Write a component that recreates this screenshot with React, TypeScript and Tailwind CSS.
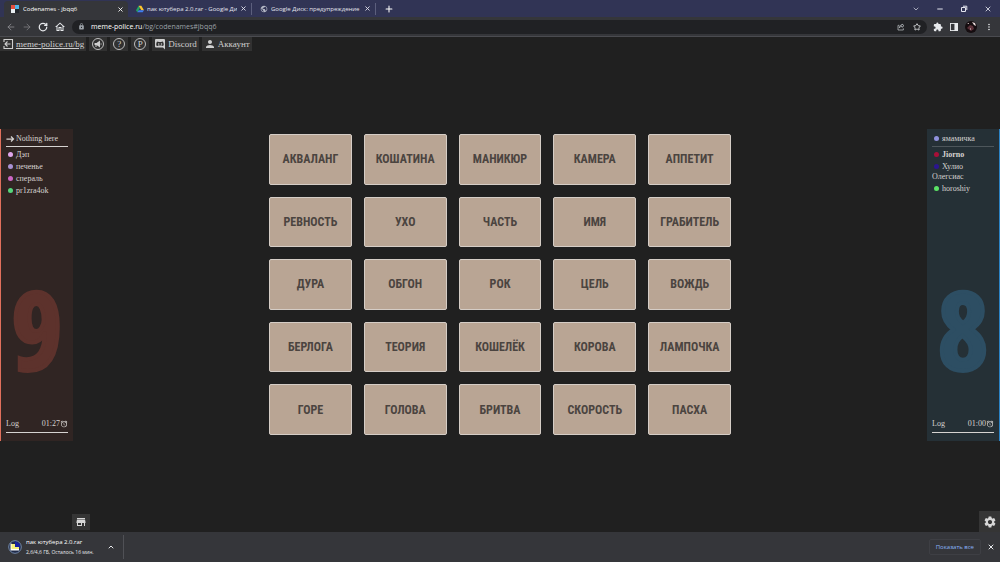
import type { ReactNode } from "react";
import { ArrowLeft, ArrowRight, ChevronDown, ChevronUp, Minus, Plus, RotateCw, Star, X } from "lucide-react";
import {
  MdAlarm,
  MdExtension,
  MdLock,
  MdMoreVert,
  MdOutlineHome,
  MdPerson,
  MdPublic,
  MdSettings,
  MdStore,
} from "react-icons/md";

const words = [
  "АКВАЛАНГ", "КОШАТИНА", "МАНИКЮР", "КАМЕРА", "АППЕТИТ",
  "РЕВНОСТЬ", "УХО", "ЧАСТЬ", "ИМЯ", "ГРАБИТЕЛЬ",
  "ДУРА", "ОБГОН", "РОК", "ЦЕЛЬ", "ВОЖДЬ",
  "БЕРЛОГА", "ТЕОРИЯ", "КОШЕЛЁК", "КОРОВА", "ЛАМПОЧКА",
  "ГОРЕ", "ГОЛОВА", "БРИТВА", "СКОРОСТЬ", "ПАСХА",
];

type Player = { name: string; color: string; bold?: boolean };

const redPlayers: Player[] = [
  { name: "Дэп", color: "#dfa6ec" },
  { name: "печенье", color: "#a992d4" },
  { name: "спераль", color: "#cc66c4" },
  { name: "pr1zra4ok", color: "#55d67b" },
];

const bluePlayers: Player[] = [
  { name: "Jiorno", color: "#a80f38", bold: true },
  { name: "Хулио Олегсиас", color: "#2b1590" },
  { name: "horoshiy", color: "#5be366" },
];

const CodenamesIcon = () => (
  <svg viewBox="0 0 8 8" className="size-2 shrink-0">
    <path fill="#e6503f" d="M0 0h4v4H0z" />
    <path fill="#4fb4e8" d="M4 0h4v4H4z" />
    <path fill="#e9eef2" d="M0 4h4v4H0z" />
    <path fill="#22262c" d="M4 4h4v4H4z" />
  </svg>
);

const DriveIcon = () => (
  <svg viewBox="0 0 24 22" className="size-2 shrink-0">
    <path fill="#22a463" d="M8 1 0 15l4 6L12 8z" />
    <path fill="#fbc52d" d="M8 1h8l8 14h-8z" />
    <path fill="#3f7df0" d="M8 15h16l-4 6H4z" />
  </svg>
);

const ExitIcon = () => (
  <svg viewBox="0 0 24 24" className="size-3" fill="none" stroke="currentColor" strokeWidth="2.2">
    <path d="M4 8V3h17v18H4v-5" />
    <path d="M17 12H6M11 7l-5 5 5 5" />
  </svg>
);

const ArrowIcon = () => (
  <svg viewBox="0 0 24 24" className="size-[10px]" fill="none" stroke="currentColor" strokeWidth="3">
    <path d="M1 12h17M12 6l6 6-6 6" />
  </svg>
);

const MegaphoneIcon = () => (
  <svg viewBox="0 0 24 24" className="size-3" fill="currentColor">
    <circle cx="12" cy="12" r="11" fill="none" stroke="currentColor" strokeWidth="1.800" />
    <path d="M5 10h4l7-5v14l-7-5v4H7v-4H5z" />
    <path d="M17.500 9a4 4 0 0 1 0 6z" />
  </svg>
);

const DiscordIcon = () => (
  <svg viewBox="0 0 24 24" className="size-3" fill="currentColor">
    <path
      fillRule="evenodd"
      d="M4 2h16a2 2 0 0 1 2 2v19l-4-4H4a2 2 0 0 1-2-2V4a2 2 0 0 1 2-2zm4 5c-1.500.3-2.500 1-2.500 1C4.600 10 4.500 12 4.500 14.500c1 1.300 2.600 1.500 3.500 1.500l1-1.300c2 .5 4 .5 6 0l1 1.300c1 0 2.500-.3 3.500-1.500 0-2.500-.2-4.500-1.200-6.500 0 0-1-.8-2.600-1l-.6 1c-2-.3-4-.3-6 0zM9.500 10.500a1.500 1.500 0 1 1 0 3 1.500 1.500 0 0 1 0-3zm5.500 0a1.500 1.500 0 1 1 0 3 1.500 1.500 0 0 1 0-3z"
    />
  </svg>
);

const LetterIcon = ({ letter }: { letter: string }) => (
  <span className="flex size-3 items-center justify-center rounded-full border border-[#bdbdbd] text-[9px] leading-none">
    {letter}
  </span>
);

const ShareIcon = () => (
  <svg viewBox="0 0 24 24" className="size-2" fill="none" stroke="currentColor" strokeWidth="2.2">
    <path d="M7 7H3v14h16v-5" />
    <path d="M15 3l6 5-6 5v-3c-4 0-6 1-8 5 0-6 3-9 8-9z" />
  </svg>
);

const SidePanelIcon = () => (
  <svg viewBox="0 0 9 9" className="size-2">
    <path fill="#e8eaed" d="M0 0h9v9H0z" />
    <path fill="#35363a" d="M1 1h4v7H1z" />
  </svg>
);

const RestoreIcon = () => (
  <svg viewBox="0 0 8 8" className="size-2" fill="none" stroke="currentColor">
    <path d="M1.500 2.500h4v4h-4zM3 1.200h3.800V5" />
  </svg>
);

const Avatar = () => (
  <svg viewBox="0 0 12 12" className="size-3">
    <circle cx="6" cy="6" r="6" fill="#150d10" />
    <path fill="#5a3038" d="M2 7l3-3 3 1 1 3-3 2z" />
    <path fill="#e8dada" d="M7 1l3 1 1 3-2-1zM2 3l2-1v1zM5 7l1 1-1 1z" />
  </svg>
);

const RarIcon = () => (
  <svg viewBox="0 0 14 14" className="size-[14px]">
    <circle cx="7" cy="7" r="6.300" fill="#1f2a48" stroke="#87a0c4" strokeWidth=".8" />
    <path fill="#1720a0" d="M7 1l5 3v4H7z" />
    <path fill="#f5ef7a" d="M3 4h4v3h4v3H3z" />
    <path fill="#fff" d="M3 9h8v1.500H3zM2.500 3.500h1v7h-1z" />
  </svg>
);

const Tab = ({ icon, title, active = false }: { icon: ReactNode; title: string; active?: boolean }) => (
  <div
    className={
      active
        ? "flex h-4 w-[124px] items-center gap-1 self-end rounded-t bg-[#35363a] pr-1 pl-[7px] text-white"
        : "flex h-3 w-[124px] items-center gap-[3px] border-r border-[#5c5f7d] pr-1 pl-2 text-[#e3e4ee]"
    }
  >
    {icon}
    <span className="min-w-0 flex-1 overflow-hidden whitespace-nowrap">{title}</span>
    <button aria-label="Закрыть вкладку">
      <X className="size-[7px]" strokeWidth={3} />
    </button>
  </div>
);

const BrowserHeader = () => (
  <header className="font-['Open_Sans','Noto_Sans',sans-serif] leading-none">
    <div className="flex h-[17px] items-center bg-[#313455] pl-1 text-[6px] leading-[10px]">
      <Tab icon={<CodenamesIcon />} title="Codenames - jbqq6" active />
      <Tab icon={<DriveIcon />} title="пак ютубера 2.0.rar - Google Ди" />
      <Tab icon={<MdPublic className="size-2 shrink-0 text-[#b5b8c6]" />} title="Google Диск: предупреждение" />
      <button aria-label="Новая вкладка" className="ml-2 text-white">
        <Plus className="size-[10px]" strokeWidth={2.5} />
      </button>
      <div className="ml-auto flex items-center gap-4 pr-2 text-[#e3e4ee]">
        <button aria-label="Поиск вкладок"><ChevronDown className="size-2" /></button>
        <button aria-label="Свернуть"><Minus className="size-2" strokeWidth={3} /></button>
        <button aria-label="Восстановить"><RestoreIcon /></button>
        <button aria-label="Закрыть"><X className="size-2" strokeWidth={2.5} /></button>
      </div>
    </div>
    <div className="flex h-5 items-center gap-1.5 border-b border-[#4a4b50] bg-[#35363a] px-1.5 text-[7px] text-[#e8eaed]">
      <button aria-label="Назад" className="text-[#8b8c90]"><ArrowLeft className="size-[10px]" /></button>
      <button aria-label="Вперёд" className="text-[#7b7c80]"><ArrowRight className="size-[10px]" /></button>
      <button aria-label="Обновить"><RotateCw className="size-[10px]" strokeWidth={3} /></button>
      <button aria-label="Домашняя страница"><MdOutlineHome className="size-3" /></button>
      <div className="flex h-[14px] flex-1 items-center gap-1.5 rounded-full bg-[#202124] px-1.5">
        <MdLock className="size-[7px] text-[#9aa0a6]" />
        <span className="flex-1 text-[#9aa0a6]">
          <span className="text-white">meme-police.ru</span>/bg/codenames#jbqq6
        </span>
        <button aria-label="Поделиться" className="mr-0.5 text-[#bdc1c6]"><ShareIcon /></button>
        <button aria-label="В закладки"><Star className="size-2" strokeWidth={2.5} /></button>
      </div>
      <div className="flex items-center gap-[7px]">
        <button aria-label="Расширения"><MdExtension className="size-[10px]" /></button>
        <button aria-label="Боковая панель"><SidePanelIcon /></button>
        <button aria-label="Профиль"><Avatar /></button>
        <button aria-label="Меню"><MdMoreVert className="size-[10px]" /></button>
      </div>
    </div>
  </header>
);

const textButton = "flex h-[14px] items-center gap-0.5 bg-[#313131] px-0.5";
const iconButton = "flex h-[14px] w-[18px] items-center justify-center bg-[#313131]";

const GameToolbar = () => (
  <nav className="flex h-[21px] items-start gap-[3px] text-[9px] leading-none text-[#cfcfcf]">
    <a href="#bg" className={textButton}>
      <ExitIcon />
      <span className="underline">meme-police.ru/bg</span>
    </a>
    <button aria-label="Объявления" className={iconButton}><MegaphoneIcon /></button>
    <button className={iconButton}><LetterIcon letter="?" /></button>
    <button className={iconButton}><LetterIcon letter="P" /></button>
    <button className={textButton}><DiscordIcon />Discord</button>
    <button className={textButton}><MdPerson className="size-3" />Аккаунт</button>
  </nav>
);

const Dot = ({ color }: { color: string }) => (
  <span className="mr-[3px] ml-0.5 inline-block size-[5px] rounded-full" style={{ backgroundColor: color }} />
);

type TeamPanelProps = {
  className: string;
  scoreClass: string;
  lineClass: string;
  master: ReactNode;
  players: Player[];
  score: number;
  time: string;
};

const TeamPanel = ({ className, scoreClass, lineClass, master, players, score, time }: TeamPanelProps) => (
  <section className={`flex h-[312px] w-[73px] flex-col pt-[5px] pb-2 text-[8px] leading-[10px] text-[#d6d3d1] ${className}`}>
    <div className={`border-b pb-0.5 ${lineClass}`}>{master}</div>
    <ul className="flex flex-col gap-0.5 pt-[3px]">
      {players.map((player) => (
        <li key={player.name} className={player.bold ? "font-bold" : ""}>
          <Dot color={player.color} />
          {player.name}
        </li>
      ))}
    </ul>
    <div
      className={`mt-auto mb-9 text-center font-['Open_Sans_Condensed','Noto_Sans_Condensed','Roboto_Condensed','Noto_Sans',sans-serif] text-[108px] leading-[108px] font-black [-webkit-text-stroke:4px_currentColor] ${scoreClass}`}
    >
      {score}
    </div>
    <div className="flex items-center justify-between border-b border-[#d6d3d1] pb-[3px]">
      <span>Log</span>
      <span className="flex items-center">
        {time}
        <MdAlarm className="size-2" />
      </span>
    </div>
  </section>
);

const Board = () => (
  <div className="grid h-[301px] w-full max-w-[462px] grid-cols-5 grid-rows-5 gap-3">
    {words.map((word) => (
      <button
        key={word}
        className="rounded-xs border border-[#d5cdc6] bg-[#b9a594] text-center font-['Roboto_Condensed','Liberation_Sans_Narrow',Roboto,sans-serif] text-[12px] leading-none font-bold text-[#4b4440]"
      >
        {word}
      </button>
    ))}
  </div>
);

const DownloadShelf = () => (
  <footer className="flex h-[30px] items-center bg-[#35363a] pr-[5px] pl-2 font-['Open_Sans','Noto_Sans',sans-serif] text-[#e8eaed]">
    <div className="flex h-6 w-[116px] items-center gap-1 border-r border-[#505156]">
      <RarIcon />
      <div className="flex-1 whitespace-nowrap">
        <div className="text-[6px] leading-[10px] text-white">пак ютубера 2.0.rar</div>
        <div className="text-[5px] leading-[10px]">2,6/4,6 ГБ, Осталось 16 мин.</div>
      </div>
      <button aria-label="Параметры загрузки" className="mr-2">
        <ChevronUp className="size-2" strokeWidth={3} />
      </button>
    </div>
    <button className="mr-1.5 ml-auto h-4 rounded-xs border border-[#3e3f44] px-1.5 text-[6px] leading-none text-[#8ab4f8]">
      Показать все
    </button>
    <button aria-label="Закрыть панель">
      <X className="size-2" strokeWidth={3} />
    </button>
  </footer>
);

export default function App() {
  return (
    <div className="flex min-h-screen flex-col bg-[#202020] font-['Liberation_Serif',serif]">
      <BrowserHeader />
      <main className="flex flex-1 flex-col">
        <GameToolbar />
        <div className="flex flex-1 items-center justify-between">
          <TeamPanel
            className="border-l border-[#e0705c] bg-[#302523] px-[5px]"
            scoreClass="text-[#5d322c]"
            lineClass="border-[#d6d3d1]"
            master={
              <span className="flex items-center">
                <ArrowIcon />
                Nothing here
              </span>
            }
            players={redPlayers}
            score={9}
            time="01:27"
          />
          <Board />
          <TeamPanel
            className="border-r border-[#2b82c4] bg-[#253036] px-[5px]"
            scoreClass="text-[#2d4e63]"
            lineClass="border-[#4d565b]"
            master={
              <span>
                <Dot color="#8f91dd" />
                ямамичка
              </span>
            }
            players={bluePlayers}
            score={8}
            time="01:00"
          />
        </div>
        <div className="flex h-[21px] items-center justify-between pl-[72px] text-[#d8d8d8]">
          <button aria-label="Магазин" className="flex h-4 w-[18px] items-center justify-center bg-[#353535]">
            <MdStore className="size-3" />
          </button>
          <button aria-label="Настройки" className="flex size-[21px] items-center justify-center bg-[#353535]">
            <MdSettings className="size-[14px]" />
          </button>
        </div>
      </main>
      <DownloadShelf />
    </div>
  );
}
